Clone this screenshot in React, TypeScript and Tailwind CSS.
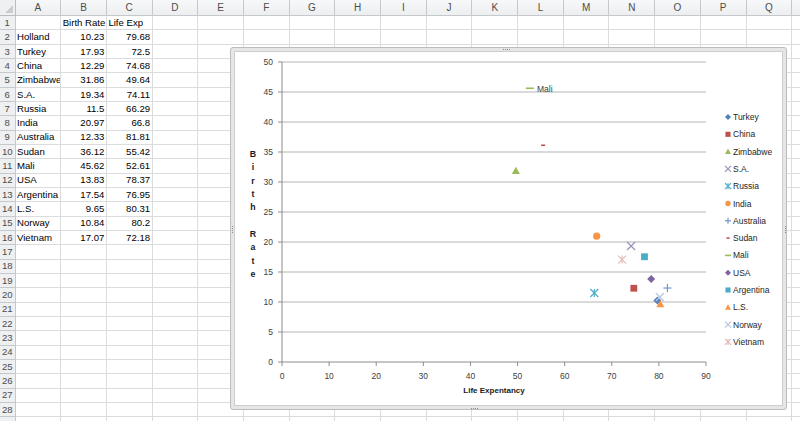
const COLS = ['A', 'B', 'C', 'D', 'E', 'F', 'G', 'H', 'I', 'J', 'K', 'L', 'M', 'N', 'O', 'P', 'Q', ''];

const DATA: [string, string, string][] = [
  ['', 'Birth Rate', 'Life Exp'],
  ['Holland', '10.23', '79.68'],
  ['Turkey', '17.93', '72.5'],
  ['China', '12.29', '74.68'],
  ['Zimbabwe', '31.86', '49.64'],
  ['S.A.', '19.34', '74.11'],
  ['Russia', '11.5', '66.29'],
  ['India', '20.97', '66.8'],
  ['Australia', '12.33', '81.81'],
  ['Sudan', '36.12', '55.42'],
  ['Mali', '45.62', '52.61'],
  ['USA', '13.83', '78.37'],
  ['Argentina', '17.54', '76.95'],
  ['L.S.', '9.65', '80.31'],
  ['Norway', '10.84', '80.2'],
  ['Vietnam', '17.07', '72.18'],
];

type Shape = 'diamond' | 'square' | 'triangle' | 'x' | 'star' | 'circle' | 'plus' | 'dash' | 'longdash';

// series as Excel drew them (first legend entry carries Holland's point)
const SERIES: { name: string; color: string; shape: Shape; x: number; y: number }[] = [
  { name: 'Turkey', color: '#4f81bd', shape: 'diamond', x: 79.68, y: 10.23 },
  { name: 'China', color: '#c0504d', shape: 'square', x: 74.68, y: 12.29 },
  { name: 'Zimbabwe', color: '#9bbb59', shape: 'triangle', x: 49.64, y: 31.86 },
  { name: 'S.A.', color: '#9b91bd', shape: 'x', x: 74.11, y: 19.34 },
  { name: 'Russia', color: '#4bacc6', shape: 'star', x: 66.29, y: 11.5 },
  { name: 'India', color: '#f79646', shape: 'circle', x: 66.8, y: 20.97 },
  { name: 'Australia', color: '#7096cf', shape: 'plus', x: 81.81, y: 12.33 },
  { name: 'Sudan', color: '#c0504d', shape: 'dash', x: 55.42, y: 36.12 },
  { name: 'Mali', color: '#9bbb59', shape: 'longdash', x: 52.61, y: 45.62 },
  { name: 'USA', color: '#8064a2', shape: 'diamond', x: 78.37, y: 13.83 },
  { name: 'Argentina', color: '#4bacc6', shape: 'square', x: 76.95, y: 17.54 },
  { name: 'L.S.', color: '#f79646', shape: 'triangle', x: 80.31, y: 9.65 },
  { name: 'Norway', color: '#b9c6e2', shape: 'x', x: 80.2, y: 10.84 },
  { name: 'Vietnam', color: '#e6b9b8', shape: 'star', x: 72.18, y: 17.07 },
];

const X0 = 282;
const Y0 = 362;
const px = (v: number) => X0 + v * 4.711;
const py = (v: number) => Y0 - v * 6;

const Marker = ({ shape, color, cx, cy, s }: { shape: Shape; color: string; cx: number; cy: number; s: number }) => {
  switch (shape) {
    case 'diamond':
      return <polygon points={`${cx},${cy - s} ${cx + s},${cy} ${cx},${cy + s} ${cx - s},${cy}`} fill={color} />;
    case 'square':
      return <rect x={cx - s * 0.85} y={cy - s * 0.85} width={s * 1.7} height={s * 1.7} fill={color} />;
    case 'triangle':
      return <polygon points={`${cx},${cy - s} ${cx + s},${cy + s * 0.8} ${cx - s},${cy + s * 0.8}`} fill={color} />;
    case 'circle':
      return <circle cx={cx} cy={cy} r={s * 0.9} fill={color} />;
    case 'x':
      return (
        <g stroke={color} strokeWidth={1.2}>
          <line x1={cx - s} y1={cy - s} x2={cx + s} y2={cy + s} />
          <line x1={cx - s} y1={cy + s} x2={cx + s} y2={cy - s} />
        </g>
      );
    case 'star':
      return (
        <g stroke={color} strokeWidth={1.2}>
          <line x1={cx - s} y1={cy - s} x2={cx + s} y2={cy + s} />
          <line x1={cx - s} y1={cy + s} x2={cx + s} y2={cy - s} />
          <line x1={cx} y1={cy - s} x2={cx} y2={cy + s} />
        </g>
      );
    case 'plus':
      return (
        <g stroke={color} strokeWidth={1.2}>
          <line x1={cx - s} y1={cy} x2={cx + s} y2={cy} />
          <line x1={cx} y1={cy - s} x2={cx} y2={cy + s} />
        </g>
      );
    case 'dash':
      return <line x1={cx - s * 0.5} y1={cy} x2={cx + s * 0.5} y2={cy} stroke={color} strokeWidth={1.6} />;
    case 'longdash':
      return <line x1={cx - s} y1={cy} x2={cx + s} y2={cy} stroke={color} strokeWidth={1.6} />;
  }
};

const Handle = ({ className }: { className: string }) => (
  <div className={`absolute flex gap-[1px] ${className}`}>
    <span className="w-[1px] h-[1px] bg-[#8a8a8a]" />
    <span className="w-[1px] h-[1px] bg-[#8a8a8a]" />
    <span className="w-[1px] h-[1px] bg-[#8a8a8a]" />
    <span className="w-[1px] h-[1px] bg-[#8a8a8a]" />
  </div>
);

const Chart = () => {
  const yTicks = [0, 5, 10, 15, 20, 25, 30, 35, 40, 45, 50];
  const xTicks = [0, 10, 20, 30, 40, 50, 60, 70, 80, 90];
  const title = ['B', 'i', 'r', 't', 'h', '', 'R', 'a', 't', 'e'];

  return (
    <div className="absolute left-[230px] top-[47px] w-[557px] h-[363px] rounded-[3px] border border-[#bdbdbd] bg-[#e6e6e6] p-[3px]">
      <Handle className="left-[272px] top-0 h-[2px] items-center" />
      <Handle className="left-[240px] bottom-0 h-[2px] items-center" />
      <Handle className="left-0 top-[178px] w-[2px] flex-col items-center" />
      <Handle className="right-0 top-[178px] w-[2px] flex-col items-center" />
      <div className="h-full w-full border border-[#cdcdcd] bg-white">
        <svg
          width={547}
          height={353}
          viewBox="235 52 547 353"
          className="block"
          style={{ fontFamily: '"Liberation Sans", Arial, sans-serif' }}
        >
          {/* gridlines */}
          {yTicks.slice(1).map((v) => (
            <line key={v} x1={X0} x2={706} y1={py(v)} y2={py(v)} stroke="#b4b4b4" strokeWidth={1} />
          ))}
          {/* axes */}
          <line x1={X0} x2={X0} y1={py(50)} y2={Y0} stroke="#8c8c8c" />
          <line x1={X0} x2={706} y1={Y0} y2={Y0} stroke="#8c8c8c" />
          {yTicks.map((v) => (
            <g key={v}>
              <line x1={X0 - 4} x2={X0} y1={py(v)} y2={py(v)} stroke="#8c8c8c" />
              <text x={273} y={py(v) + 3} fontSize={8.5} fill="#404040" textAnchor="end">
                {v}
              </text>
            </g>
          ))}
          {xTicks.map((v) => (
            <g key={v}>
              <line x1={px(v)} x2={px(v)} y1={Y0} y2={Y0 + 4} stroke="#8c8c8c" />
              <text x={px(v)} y={379} fontSize={8.5} fill="#404040" textAnchor="middle">
                {v}
              </text>
            </g>
          ))}
          <text x={494} y={393} fontSize={8} fontWeight="bold" fill="#1a1a1a" textAnchor="middle">
            Life Expentancy
          </text>
          {title.map((c, i) => (
            <text key={i} x={253} y={157 + i * 13.35} fontSize={8.8} fontWeight="bold" fill="#1a1a1a" textAnchor="middle">
              {c}
            </text>
          ))}
          {/* points */}
          {SERIES.map((s) => (
            <Marker key={s.name} shape={s.shape} color={s.color} cx={px(s.x)} cy={py(s.y)} s={4} />
          ))}
          <text x={537} y={92} fontSize={8.5} fill="#404040">
            Mali
          </text>
          {/* legend */}
          {SERIES.map((s, i) => {
            const y = 117 + i * 17.3;
            return (
              <g key={s.name}>
                <Marker shape={s.shape} color={s.color} cx={728} cy={y} s={3} />
                <text x={733} y={y + 3} fontSize={8.5} fill="#262626">
                  {s.name}
                </text>
              </g>
            );
          })}
        </svg>
      </div>
    </div>
  );
};

export default function App() {
  return (
    <div className="relative w-[800px] h-[421px] overflow-hidden bg-white font-['Liberation_Sans',Arial,sans-serif]">
      <div className="grid grid-cols-[15.5px_repeat(18,45.7px)] grid-rows-[16px_repeat(29,14.33px)] text-[9.6px] leading-none text-black">
        {/* header row */}
        <div className="relative border-r border-b border-[#b9bcc0] bg-[#eef0f2]">
          <svg width={8} height={8} className="absolute right-[2px] bottom-[2px]">
            <polygon points="8,0 8,8 0,8" fill="#c9cbcd" />
          </svg>
        </div>
        {COLS.map((c, i) => (
          <div
            key={i}
            className="flex items-center justify-center border-r border-b border-[#c6c9cc] bg-gradient-to-b from-[#f7f8f9] to-[#eceef0] text-[10px] text-[#4d4d4d]"
          >
            {c}
          </div>
        ))}
        {/* body rows */}
        {Array.from({ length: 29 }, (_, r) => {
          const row = DATA[r];
          return [
            <div
              key={`h${r}`}
              className="flex items-center justify-center border-r border-b border-[#c6c9cc] bg-[#eef0f2] text-[#4d4d4d]"
            >
              {r + 1}
            </div>,
            ...COLS.map((c, ci) => {
              let text = '';
              let right = false;
              if (row && ci < 3) {
                text = row[ci];
                right = ci > 0 && r > 0;
              }
              return (
                <div
                  key={`${r}-${ci}`}
                  className={`flex items-center overflow-hidden whitespace-nowrap border-r border-b border-[#dadcdd] px-[1.5px] ${
                    right ? 'justify-end' : 'justify-start'
                  }`}
                >
                  {text}
                </div>
              );
            }),
          ];
        })}
      </div>
      <Chart />
    </div>
  );
}
